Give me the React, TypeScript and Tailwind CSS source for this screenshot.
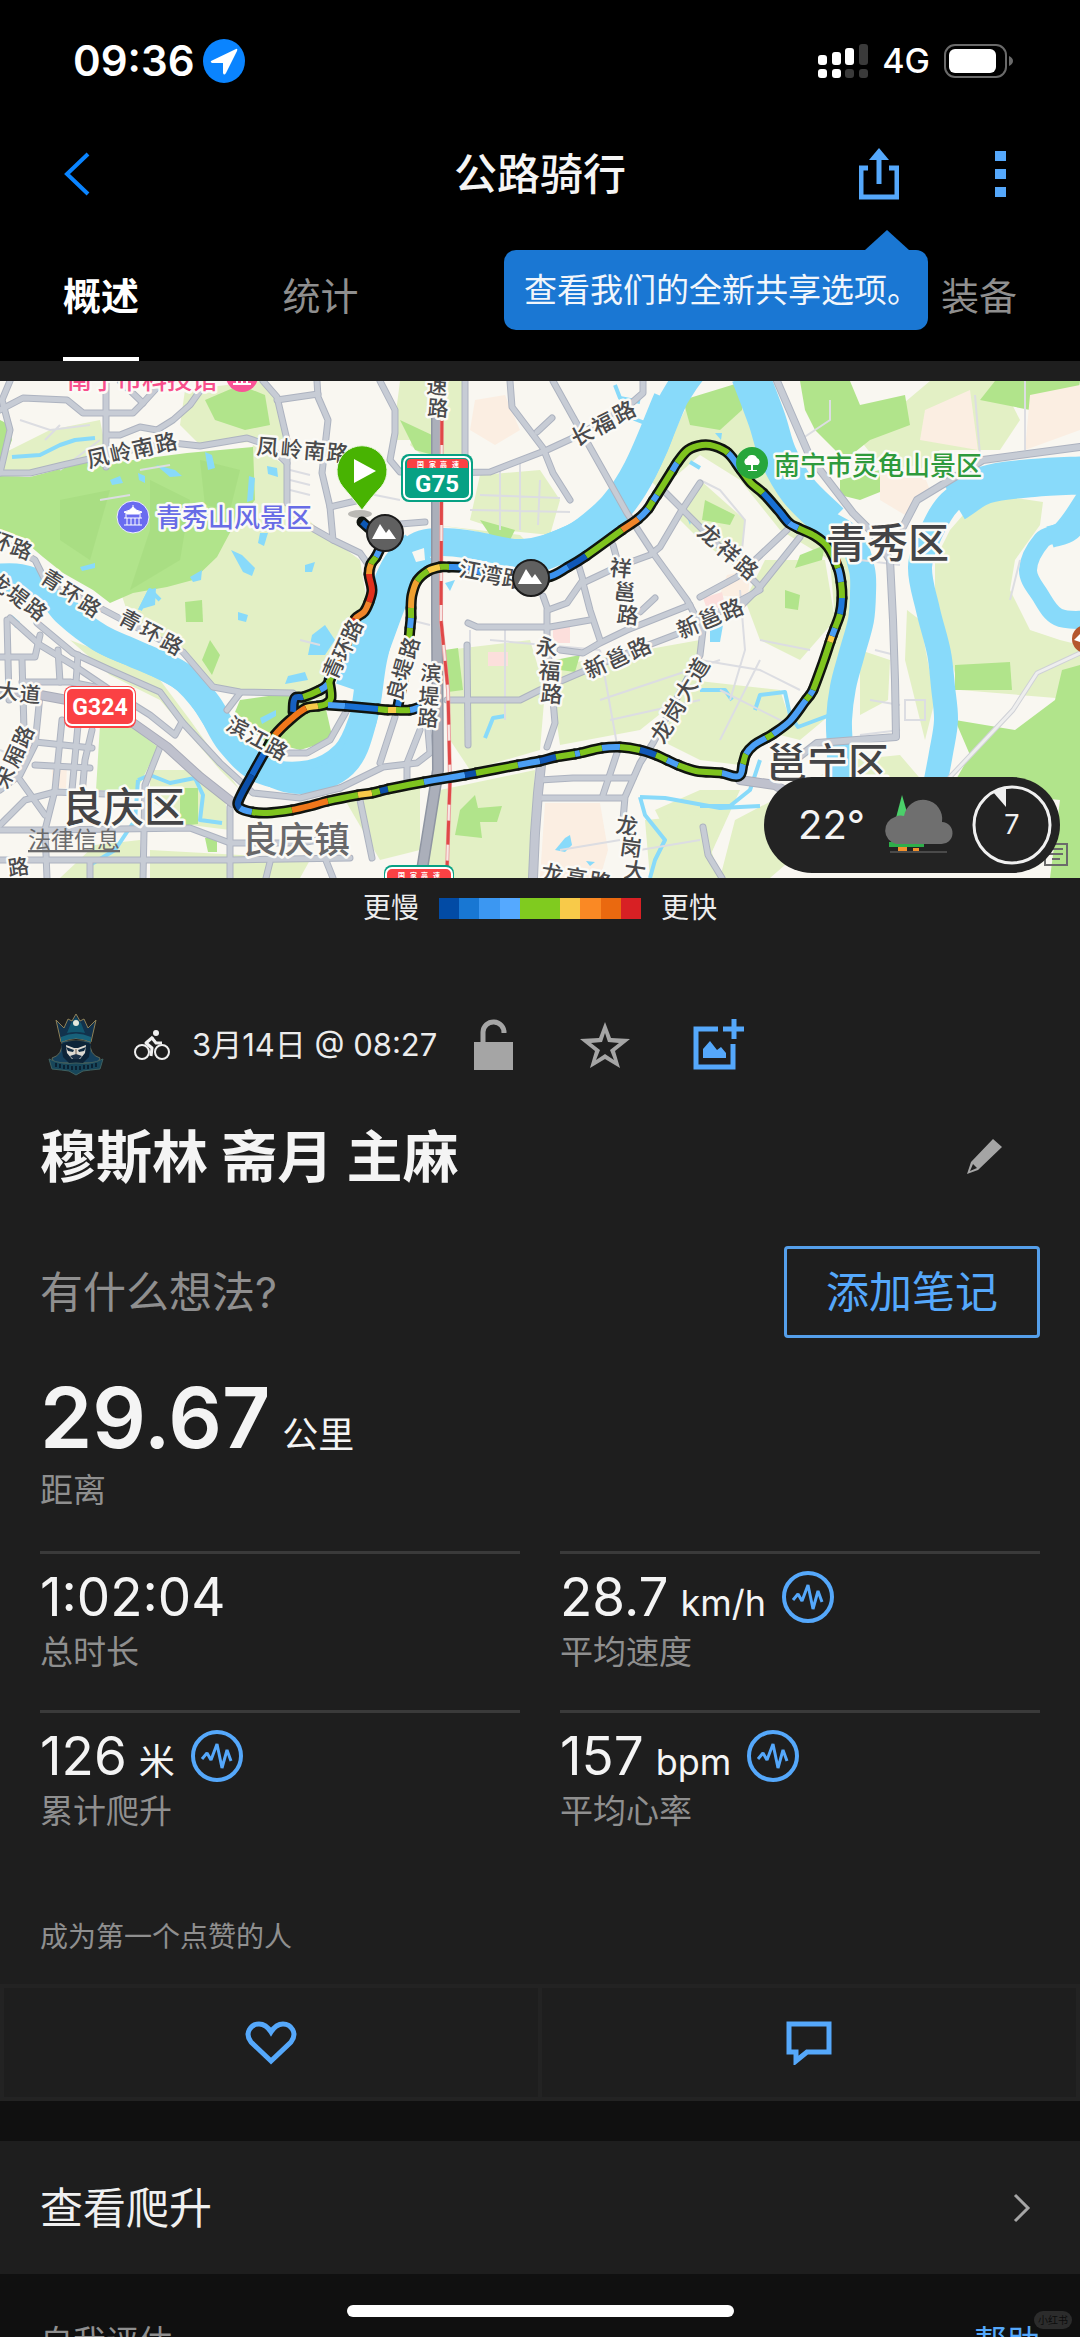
import React from "react";

const FONT = "font-['Inter','Noto_Sans_CJK_SC',sans-serif]";

type Pt = [number, number];

/* "M1 2 3 4" -> [[1,2],[3,4]] */
function points(d: string): Pt[] {
  const n = (d.match(/-?\d+/g) || []).map(Number);
  const out: Pt[] = [];
  for (let i = 0; i + 1 < n.length; i += 2) out.push([n[i], n[i + 1]]);
  return out;
}

/* Catmull-Rom curve through the points; `before` and `after` steer the end tangents. */
function curve(p: Pt[], before?: Pt, after?: Pt): string {
  let s = `M${p[0][0]} ${p[0][1]}`;
  for (let i = 0; i < p.length - 1; i++) {
    const a = p[i - 1] || before || p[i];
    const b = p[i];
    const c = p[i + 1];
    const e = p[i + 2] || after || c;
    const len = Math.hypot(c[0] - b[0], c[1] - b[1]);
    const t1 = Math.hypot(c[0] - a[0], c[1] - a[1]) || 1;
    const t2 = Math.hypot(e[0] - b[0], e[1] - b[1]) || 1;
    const k = len / 3;
    const x1 = b[0] + ((c[0] - a[0]) / t1) * k;
    const y1 = b[1] + ((c[1] - a[1]) / t1) * k;
    const x2 = c[0] - ((e[0] - b[0]) / t2) * k;
    const y2 = c[1] - ((e[1] - b[1]) / t2) * k;
    s += `C${x1.toFixed(1)} ${y1.toFixed(1)} ${x2.toFixed(1)} ${y2.toFixed(1)} ${c[0]} ${c[1]}`;
  }
  return s;
}

/* Places each character of a street name along a line, every glyph turned by `rot`. */
function Street({
  t,
  a,
  b,
  rot,
  size = 22,
  fill = "#4a4a4c",
  weight = 500,
}: {
  t: string;
  a: Pt;
  b: Pt;
  rot: number;
  size?: number;
  fill?: string;
  weight?: number;
}) {
  const r = (rot * Math.PI) / 180;
  const n = Math.max(1, t.length - 1);
  const ox = -size / 2;
  const oy = size * 0.38;
  const xs: number[] = [];
  const ys: number[] = [];
  for (let i = 0; i < t.length; i++) {
    const cx = a[0] + ((b[0] - a[0]) * i) / n;
    const cy = a[1] + ((b[1] - a[1]) * i) / n;
    xs.push(Math.round(cx + ox * Math.cos(r) - oy * Math.sin(r)));
    ys.push(Math.round(cy + ox * Math.sin(r) + oy * Math.cos(r)));
  }
  return (
    <text
      x={xs.join(" ")}
      y={ys.join(" ")}
      rotate={rot}
      fontSize={size}
      fontWeight={weight}
      fill={fill}
      stroke="#fbfaf6"
      strokeWidth={5}
      strokeLinejoin="round"
      paintOrder="stroke"
    >
      {t}
    </text>
  );
}

function Place({ t, x, y, size, fill = "#444446" }: { t: string; x: number; y: number; size: number; fill?: string }) {
  return (
    <text
      x={x}
      y={y}
      fontSize={size}
      fontWeight={500}
      fill={fill}
      stroke="#fbfaf6"
      strokeWidth={5}
      strokeLinejoin="round"
      paintOrder="stroke"
    >
      {t}
    </text>
  );
}

const ROADS = [
  "M0 473 30 473 63 465 85 460 140 448 173 443 200 446 247 438 268 445 287 463 287 503",
  "M0 410 23 398 67 400 83 413 133 413 143 403 163 381",
  "M120 381 143 403",
  "M106 381V467",
  "M107 435 120 435 140 427 157 430 173 420 190 405 207 381",
  "M263 381 277 397 287 440 287 463",
  "M317 381 318 397 328 420 322 473 330 507 333 540 360 553 372 570",
  "M277 400 318 394",
  "M303 523 333 540",
  "M330 507 360 500",
  "M10 381 2 400 10 430 0 473",
  "M380 381 395 410 395 433 390 460 400 472 440 473 490 472 547 450 573 438 627 407 643 393 643 381",
  "M465 381V460",
  "M400 524 425 522",
  "M510 381 512 407 543 448 553 473 570 500",
  "M537 432 552 418",
  "M553 381 573 417 627 513 653 553 687 600 703 630 700 655 653 743 640 763 625 797 623 820",
  "M583 583 617 567 650 555 660 547 680 513 700 483",
  "M543 596 548 610 567 603 583 580 577 560",
  "M583 583 590 610 600 640",
  "M665 492 720 547 760 587",
  "M700 597 737 577 787 530",
  "M735 612 760 587 800 537",
  "M447 700 520 700 540 690 617 657 680 633 760 590",
  "M560 650 583 653 600 643 627 630 690 605",
  "M467 645 468 745",
  "M468 623 477 627 550 627 590 620",
  "M613 545 620 570",
  "M640 612 655 598",
  "M547 610 547 640 553 700 555 723 547 747",
  "M540 780 573 778 633 778",
  "M540 798 623 798",
  "M617 753 603 795",
  "M340 788 383 767 417 763 430 753 428 730",
  "M395 717 380 763",
  "M420 730 407 763 407 780",
  "M0 540 35 560 45 580 100 608 183 652 213 687 240 692 293 693 300 700",
  "M277 753 307 753 330 740 347 710",
  "M227 710 240 693",
  "M37 623 73 653 110 670 160 692 183 723 220 763 253 793 300 798 340 788",
  "M10 618 40 645 73 665 110 690 150 715 175 735 182 722",
  "M230 807V878",
  "M0 830 47 830 190 828 230 843 300 843 330 838",
  "M0 860 230 860 350 858",
  "M160 747 145 785 143 878",
  "M7 620 9 700",
  "M0 657 35 657 40 635",
  "M22 682 70 682 110 690",
  "M58 650 60 682",
  "M78 655 76 682",
  "M22 660 24 730",
  "M40 695 35 745 20 775 0 790",
  "M62 720 55 790 45 830 47 878",
  "M78 725 72 790",
  "M92 730 85 760 82 795",
  "M35 742 92 748",
  "M35 765 90 768",
  "M20 780 45 815",
  "M0 825 25 800 55 792 130 795",
  "M90 862V878",
  "M360 800 372 858",
  "M325 858 333 878",
  "M270 862 266 878",
  "M703 827 708 855 722 878",
];

const LANES =
  "M20 420 50 430 90 425M45 440 60 425M140 470 170 465M500 470V530M520 460V530M540 480 538 525M480 495 560 498M470 510 570 512M410 470 412 500M350 490 400 500M410 620 430 625M470 630V650M505 627V720M490 640 600 650M600 700 720 660M610 720 700 700M600 650 618 750M720 690 790 725M700 660 760 670 800 690M740 590 745 650 730 700M720 740 760 660M760 640 810 650M860 560 900 565M875 650 895 655M870 700 900 705M860 735 900 730M905 700 925 700 925 720 905 720ZM975 395 980 455M1025 381V450M800 440 830 420 830 400M1010 600 1020 560M300 640 320 645M560 850 620 840M640 850 700 840M100 500 130 495M0 750 20 760M100 440 60 470M290 470 310 475M290 480 310 485M290 490 310 495M700 480 720 490 745 520 740 570";

const WATER: { d: string; w: number }[] = [
  { d: "M-10 578 20 578 45 588 67 613 100 638 133 653 180 675 208 705 230 742 262 770 310 774 345 755 362 722 368 690 372 655 385 620 395 580 415 548 440 542 473 545 523 553 573 538 607 512 637 480 655 445 668 410 685 381 710 350", w: 28 },
  { d: "M-10 585 30 585 60 603 100 640 150 662 190 685 220 727 255 765 300 782 345 765 365 720 375 660 385 620", w: 24 },
  { d: "M355 690 372 640 400 570 420 548", w: 40 },
  { d: "M540 555 585 535 615 508 640 470 670 400", w: 34 },
  { d: "M680 345 730 345 756 381 765 420 780 460 795 490 823 520 850 538 862 570 863 593 861 620 852 653 843 687 839 720 840 753 838 800", w: 26 },
  { d: "M750 375 767 420 778 455 798 490 830 522", w: 38 },
  { d: "M1100 470 1033 478 983 483 950 502 930 535 920 567 928 610 939 653 943 687 946 720 941 753 935 785", w: 24 },
  { d: "M1090 475 1033 478 985 485 955 503", w: 38 },
  { d: "M1090 490 1062 530 1042 540 1028 570 1040 595 1058 617 1090 620", w: 18 },
  { d: "M1095 500 1070 530 1050 537", w: 22 },
];

const BROOKS =
  "M12 457 40 455 60 445 75 440 95 438M615 385 620 398 640 402M632 418 650 425M485 738 493 718 505 716M640 797 665 798 720 808 760 806M760 760 750 790 730 806 700 806M640 797 645 815 665 840 655 860 650 878M138 780 150 775 170 783 195 778 203 795 200 820 222 823M138 780 135 820 115 850 90 865M700 690 725 690 732 700M755 710 760 695 785 692 790 715 798 727 830 715M690 462 700 468M140 610 150 590 160 600";

/* Speed-coloured pieces of the ride, in riding order. */
const SEG: [string, string][] = [
  ["#0c58b5", "M362 522 372 530 385 533"],
  ["#4b9ff5", "M384 540 376 557"],
  ["#7fc41f", "M376 557 371 564"],
  ["#f09a2e", "M371 564 369 574"],
  ["#e0301c", "M369 574 372 590 369 602"],
  ["#f0852a", "M369 602 364 612 355 619"],
  ["#e0301c", "M355 619 348 640 340 655"],
  ["#f0852a", "M340 655 332 675"],
  ["#7fc41f", "M332 675 328 684"],
  ["#4b9ff5", "M328 684 320 690"],
  ["#7fc41f", "M320 690 303 697"],
  ["#1760c0", "M303 697 295 698 293 712"],
  ["#7fc41f", "M329 680 331 698 326 704 318 706"],
  ["#f8ca49", "M318 706 306 708"],
  ["#f0771b", "M306 708 290 720 275 735"],
  ["#7fc41f", "M275 735 266 750"],
  ["#1565c8", "M266 750 252 775"],
  ["#0b4fa8", "M252 775 238 802 240 808"],
  ["#4b9ff5", "M240 808 252 812"],
  ["#7fc41f", "M252 812 267 813 292 810"],
  ["#f0771b", "M292 810 310 806 328 801"],
  ["#7fc41f", "M328 801 358 795"],
  ["#f8ca49", "M358 795 372 793"],
  ["#7fc41f", "M372 793 380 791"],
  ["#0b4fa8", "M380 791 388 789"],
  ["#7fc41f", "M388 789 424 782"],
  ["#4b9ff5", "M424 782 465 775"],
  ["#0b4fa8", "M465 775 476 773"],
  ["#7fc41f", "M476 773 518 765"],
  ["#4b9ff5", "M518 765 540 761"],
  ["#1058b8", "M540 761 556 757"],
  ["#7fc41f", "M556 757 575 754"],
  ["#4b9ff5", "M575 754 580 753"],
  ["#7fc41f", "M580 753 602 748"],
  ["#4b9ff5", "M602 748 620 747"],
  ["#7fc41f", "M620 747 640 750"],
  ["#1058b8", "M640 750 656 755"],
  ["#7fc41f", "M656 755 667 760"],
  ["#4b9ff5", "M667 760 678 765"],
  ["#7fc41f", "M678 765 696 771 722 773"],
  ["#4b9ff5", "M722 773 739 776 743 764"],
  ["#7fc41f", "M743 764 746 754"],
  ["#4b9ff5", "M746 754 754 745 766 738"],
  ["#7fc41f", "M766 738 773 734"],
  ["#4b9ff5", "M773 734 790 721 806 700"],
  ["#7fc41f", "M806 700 810 695"],
  ["#4b9ff5", "M810 695 813 690"],
  ["#7fc41f", "M813 690 823 663 830 642"],
  ["#f8ca49", "M830 642 832 636"],
  ["#4b9ff5", "M832 636 835 628"],
  ["#7fc41f", "M835 628 840 614"],
  ["#1f78d8", "M840 614 842 598"],
  ["#7fc41f", "M842 598 841 582"],
  ["#4b9ff5", "M841 582 838 568"],
  ["#7fc41f", "M838 568 828 547 815 536 798 528"],
  ["#4b9ff5", "M798 528 789 523"],
  ["#1870d4", "M789 523 779 511 763 493"],
  ["#7fc41f", "M763 493 751 483 741 470"],
  ["#4b9ff5", "M741 470 728 453"],
  ["#7fc41f", "M728 453 714 446 702 445 688 450 677 463"],
  ["#4b9ff5", "M677 463 672 471"],
  ["#7fc41f", "M672 471 657 495"],
  ["#4b9ff5", "M657 495 653 501"],
  ["#7fc41f", "M653 501 648 509"],
  ["#4b9ff5", "M648 509 638 519"],
  ["#f0852a", "M638 519 622 530"],
  ["#7fc41f", "M622 530 586 556"],
  ["#1058b8", "M586 556 568 567"],
  ["#3a92ee", "M568 567 548 577"],
  ["#3a92ee", "M548 577 500 577 465 568 449 567"],
  ["#7fc41f", "M449 567 440 567"],
  ["#f8ca49", "M440 567 428 571"],
  ["#7fc41f", "M428 571 417 581"],
  ["#f0a030", "M417 581 412 595 411 608"],
  ["#7fc41f", "M411 608 411 618"],
  ["#4b9ff5", "M411 618 410 628"],
  ["#7fc41f", "M410 628 408 650"],
  ["#1f78d8", "M408 650 403 680 398 706"],
  ["#4b9ff5", "M328 705 345 706"],
  ["#1870d4", "M345 706 378 709"],
  ["#7fc41f", "M378 709 388 710"],
  ["#f8ca49", "M388 710 396 710"],
  ["#7fc41f", "M396 710 410 710"],
  ["#4b9ff5", "M410 710 420 707"],
];

const SEG_PTS = SEG.map(([, d]) => points(d));

/* Smooth each piece using its neighbours, so that the joints stay continuous. */
const TRACK = SEG.map(([color], i) => {
  const p = SEG_PTS[i];
  const prev = SEG_PTS[i - 1];
  const next = SEG_PTS[i + 1];
  const last = p[p.length - 1];
  const joinsPrev = prev && prev[prev.length - 1][0] === p[0][0] && prev[prev.length - 1][1] === p[0][1];
  const joinsNext = next && next[0][0] === last[0] && next[0][1] === last[1];
  return {
    color,
    d: curve(p, joinsPrev ? prev[prev.length - 2] : undefined, joinsNext ? next[1] : undefined),
  };
});

function Mountain({ x, y }: { x: number; y: number }) {
  return (
    <g>
      <circle cx={x} cy={y} r={18} fill="#606060" stroke="#1b1b1b" strokeWidth={2} />
      <path d={`M${x - 13} ${y + 6}L${x - 5} ${y - 9}L${x + 1} ${y}L${x + 4} ${y - 4}L${x + 11} ${y + 6}Z`} fill="#fff" />
    </g>
  );
}

function MapView() {
  return (
    <svg viewBox="0 381 1080 497" className="block w-full" role="img" aria-label="骑行路线地图">
      <rect x="0" y="381" width="1080" height="497" fill="#f9f7f1" />

      {/* meadows */}
      <g fill="#e3f0c5">
        <path d="M0 455 50 430 100 420 106 450 60 470 0 480Z" />
        <path d="M185 390 260 381 275 400 285 440 200 445 180 425Z" />
        <path d="M253 445 285 465 285 500 320 530 360 560 370 620 340 660 330 700 215 690 190 655 130 620 120 590 190 580 225 540Z" />
        <path d="M400 381 465 381 465 470 410 440 390 440 395 420Z" />
        <path d="M410 445 430 400 465 400 463 465 440 470Z" />
        <path d="M480 475 540 470 560 500 550 535 500 530 470 520Z" />
        <path d="M435 525 520 535 530 545 470 530Z" />
        <path d="M690 400 745 381 758 430 775 480 800 520 850 545 852 610 838 680 830 715 800 740 780 735 810 690 835 620 830 560 780 530 740 480 700 455 660 490 650 480Z" />
        <path d="M700 480 745 520 740 570 700 540 680 520Z" />
        <path d="M765 560 825 560 835 620 800 660 760 640 745 600Z" />
        <path d="M860 440 930 381 1000 381 1020 420 1000 450 940 450 900 490Z" />
        <path d="M950 530 970 507 1010 497 1043 502 1040 525 1015 560 1010 590 1030 630 1060 640 1080 645 1080 700 960 690 945 640 935 590 935 560Z" />
        <path d="M447 650 530 640 545 690 540 750 470 770 450 740Z" />
        <path d="M560 665 700 640 690 690 640 730 560 745 555 710Z" />
        <path d="M690 680 780 690 790 720 740 765 700 760 660 740Z" />
        <path d="M440 790 535 770 530 878 425 878Z" />
        <path d="M700 790 740 790 700 878 660 878 670 840 655 810Z" />
        <path d="M645 820 700 815 720 878 650 878Z" />
        <path d="M70 640 110 655 160 680 190 720 240 790 220 770 160 700 110 675Z" />
        <path d="M150 770 200 770 225 800 230 830 190 825 150 800Z" />
        <path d="M95 845 140 840 140 878 60 878Z" />
        <path d="M240 855 310 860 300 878 150 878 150 850Z" />
        <path d="M860 650 890 660 888 700 860 715Z" />
        <path d="M907 610 920 620 935 700 925 740 905 660Z" />
        <path d="M850 760 900 755 930 790 860 800 770 878 720 878 735 820Z" />
        <path d="M345 800 420 785 420 850 380 860Z" />
      </g>

      {/* woods */}
      <g fill="#b1e48b">
        <path d="M0 476 30 477 83 463 133 460 187 453 253 447 255 500 233 527 217 557 193 580 167 587 133 593 110 603 93 590 63 573 43 557 23 540 0 537Z" />
        <path d="M205 400 240 385 265 395 270 425 245 430 215 420Z" />
        <path d="M185 602 202 600 203 622 186 622Z" />
        <path d="M240 700 290 693 325 705 333 740 300 750 262 740 235 712Z" />
        <path d="M683 400 745 381 742 410 720 430 690 425Z" />
        <path d="M800 381 850 381 860 405 905 395 910 425 870 440 845 460 815 430 805 410Z" />
        <path d="M840 480 880 470 885 490 860 500 840 495Z" />
        <path d="M995 381 1080 381 1078 395 1030 410 980 400Z" />
        <path d="M400 420 432 435 433 455 415 450Z" />
        <path d="M445 650 458 648 463 690 448 692Z" />
        <path d="M555 660 580 655 575 672 560 670Z" />
        <path d="M460 810 475 795 478 808 502 806 497 822 480 822 482 838 455 835Z" />
        <path d="M705 500 735 515 730 525 702 520Z" />
        <path d="M800 555 825 545 822 560 795 568Z" />
        <path d="M785 590 800 595 798 610 785 608Z" />
        <path d="M955 665 1010 662 1012 690 955 690Z" />
        <path d="M955 720 1015 730 1055 700 1062 670 1080 665 1080 878 1050 878 1060 800 950 790 970 755Z" />
        <path d="M180 788 198 788 198 824 180 826Z" />
        <path d="M205 838 217 838 217 852 208 852Z" />
        <path d="M210 640 220 655 212 675 202 660Z" />
        <path d="M0 420 10 425 12 440 0 470Z" />
        <path d="M480 520 515 530 510 540 490 535Z" />
      </g>
      <path d="M100 725 133 728 158 747 142 780 135 792 96 790Z" fill="#cdeeb0" />
      <g fill="#a2d97c" opacity="0.5">
        <path d="M150 480 190 500 180 560 130 590 150 530Z" />
        <path d="M60 500 110 490 90 560 60 540Z" />
        <path d="M200 460 240 470 230 510 205 505Z" />
      </g>
      <g fill="#fbeee2">
        <path d="M475 400 505 395 520 430 495 445 470 430Z" />
        <path d="M545 803 600 803 608 850 600 878 540 878Z" />
        <path d="M925 410 970 390 978 450 920 440Z" />
        <path d="M880 470 920 465 930 490 905 515 880 500Z" />
        <path d="M1030 395 1080 385 1080 430 1025 450Z" />
        <path d="M52 770 67 765 66 788 52 788Z" />
        <path d="M727 575 750 570 748 600 720 595Z" />
      </g>
      <g fill="#fcdfdc">
        <path d="M488 652H508V666H488Z" />
        <path d="M553 627H570V643H553Z" />
        <path d="M703 598 722 592 725 605 708 612Z" />
      </g>

      {/* water */}
      <g fill="none" stroke="#88dafa" strokeLinejoin="round">
        {WATER.map((w, i) => (
          <path key={i} d={curve(points(w.d))} strokeWidth={w.w} />
        ))}
        <path d={BROOKS} strokeWidth={4} />
      </g>
      <g fill="#88dafa">
        <path d="M156 465 175 470 182 476 170 477Z" />
        <path d="M205 452 212 455 215 468 208 470Z" />
        <path d="M110 480 120 476 123 483 112 485Z" />
        <path d="M138 473 145 476 145 483 139 480Z" />
        <path d="M267 466 277 468 278 477 268 474Z" />
        <path d="M249 476 255 478 253 500 247 502Z" />
        <path d="M231 550 242 555 255 568 252 576 243 572Z" />
        <path d="M260 533 268 533 264 546 258 543Z" />
        <path d="M80 567 95 563 95 568 82 571Z" />
        <path d="M190 577 202 570 201 580 193 582Z" />
        <path d="M148 590 156 588 155 605 138 610Z" />
        <path d="M238 612 248 615 246 622 238 620Z" />
        <path d="M305 565 315 562 312 572 305 572Z" />
        <path d="M312 635 325 625 335 640 325 655 308 655Z" />
        <path d="M288 676 305 672 308 680 285 684Z" />
        <path d="M260 718 276 710 276 716 262 724Z" />
        <path d="M12 615 20 622 15 628Z" />
        <path d="M710 630 723 625 720 642 710 642Z" />
        <path d="M565 838 570 835 572 845 565 852 555 850Z" />
        <path d="M586 861 595 862 590 866Z" />
        <path d="M445 583 455 580 450 591Z" />
        <path d="M684 510 692 518 690 525Z" />
        <path d="M715 433 722 433 721 440Z" />
      </g>
      <path d="M412 552 424 548 425 560 416 562Z" fill="#f9f7f1" />

      {/* roads */}
      <path d={LANES} fill="none" stroke="#dcdde2" strokeWidth={2} />
      <g fill="none" strokeLinejoin="round" strokeLinecap="round">
        {ROADS.map((d, i) => (
          <path key={i} d={d} stroke="#adb3c0" strokeWidth={7} />
        ))}
        <path
          d="M777 381 810 457 853 513 873 533 890 560 893 620 895 680 896 737 817 743 795 760M903 527 917 500 950 480 983 460 1080 447"
          stroke="#adb3c0"
          strokeWidth={8}
        />
        <path d="M541 765 538 793 535 833 533 878" stroke="#adb3c0" strokeWidth={10} />
        {ROADS.map((d, i) => (
          <path key={i} d={d} stroke="#c7ccd5" strokeWidth={5} />
        ))}
        <path
          d="M777 381 810 457 853 513 873 533 890 560 893 620 895 680 896 737 817 743 795 760M903 527 917 500 950 480 983 460 1080 447"
          stroke="#c7ccd5"
          strokeWidth={6}
        />
        <path d="M541 765 538 793 535 833 533 878" stroke="#c3c7d2" strokeWidth={8} />
        <path d="M0 690 40 695 67 700 133 723 167 747 200 777 233 803M740 780 775 785 800 800" stroke="#a9acb9" strokeWidth={10} />
        <path d="M0 690 40 695 67 700 133 723 167 747 200 777 233 803M740 780 775 785 800 800" stroke="#bfc1cd" strokeWidth={8} />
        <path d="M1080 653 1037 673 1013 710 950 777" stroke="#cfd1d6" strokeWidth={5} />
        <path d="M1080 653 1037 673 1013 710 950 777" stroke="#eeeeee" strokeWidth={3} />
        <path d="M437 381V620L438 770 422 870" stroke="#8f95a2" strokeWidth={12} />
        <path d="M437 381V620L438 770 422 870" stroke="#abafba" strokeWidth={9} />
        <path d="M442 381 441 620 448 690 450 780 447 870" stroke="#e9a3a3" strokeWidth={4} strokeLinecap="butt" />
        <path d="M442 381 441 620 448 690 450 780 447 870" stroke="#f8e6e3" strokeWidth={2} strokeLinecap="butt" />
        <path
          d="M442 381 441 620 448 690 450 780 447 870"
          stroke="#e04848"
          strokeWidth={3}
          strokeDasharray="24 16"
          strokeLinecap="butt"
        />
      </g>

      {/* recorded track */}
      <g fill="none" stroke="#10140f" strokeWidth={11} strokeLinejoin="round" strokeLinecap="round">
        {TRACK.map((s, i) => (
          <path key={i} d={s.d} />
        ))}
      </g>
      <g fill="none" strokeWidth={6} strokeLinejoin="round" strokeLinecap="butt">
        {TRACK.map((s, i) => (
          <path key={i} d={s.d} stroke={s.color} />
        ))}
      </g>

      {/* street names */}
      <Street t="凤岭南路" a={[98, 457]} b={[166, 442]} rot={-13} />
      <Street t="凤岭南路" a={[268, 447]} b={[338, 453]} rot={5} />
      <Street t="速路" a={[437, 386]} b={[438, 408]} rot={4} size={21} />
      <Street t="长福路" a={[582, 435]} b={[624, 412]} rot={-27} />
      <Street t="江湾路" a={[470, 570]} b={[513, 579]} rot={10} />
      <Street t="祥邕路" a={[621, 568]} b={[628, 615]} rot={6} size={22} />
      <Street t="龙祥路" a={[710, 535]} b={[747, 568]} rot={40} size={22} />
      <Street t="新邕路" a={[688, 627]} b={[732, 609]} rot={-23} size={22} />
      <Street t="新邕路" a={[595, 667]} b={[639, 648]} rot={-25} size={22} />
      <Street t="永福路" a={[547, 647]} b={[552, 694]} rot={5} size={22} />
      <Street t="龙岗大道" a={[662, 731]} b={[698, 669]} rot={-58} size={22} />
      <Street t="龙岗大" a={[627, 825]} b={[635, 870]} rot={8} size={22} />
      <Street t="龙高路" a={[552, 873]} b={[600, 881]} rot={9} size={22} />
      <Street t="环路" a={[2, 541]} b={[22, 549]} rot={20} size={21} />
      <Street t="青环路" a={[52, 580]} b={[90, 606]} rot={32} size={21} />
      <Street t="青环路" a={[130, 620]} b={[172, 644]} rot={28} size={21} />
      <Street t="龙堤路" a={[0, 583]} b={[36, 609]} rot={38} size={21} />
      <Street t="大道" a={[8, 691]} b={[30, 694]} rot={5} size={21} />
      <Street t="宋厢路" a={[4, 777]} b={[23, 736]} rot={-66} size={21} />
      <Street t="路" a={[18, 867]} b={[18, 867]} rot={-8} size={21} />
      <Street t="滨江路" a={[238, 727]} b={[277, 749]} rot={28} size={21} />
      <Street t="青环路" a={[333, 668]} b={[352, 630]} rot={-66} size={21} />
      <Street t="良堤路" a={[396, 690]} b={[409, 648]} rot={-74} size={21} />
      <Street t="滨堤路" a={[431, 673]} b={[428, 718]} rot={4} size={21} />

      <Place t="青秀区" x={826} y={558} size={41} />
      <Place t="良庆区" x={62} y={822} size={41} />
      <Place t="邕宁区" x={766} y={778} size={41} />
      <Place t="良庆镇" x={242} y={853} size={36} fill="#68686a" />
      <Place t="青秀山风景区" x={156} y={527} size={26} fill="#686ce6" />
      <Place t="南宁市灵龟山景区" x={774} y={475} size={26} fill="#2e9a3c" />
      <Place t="南宁市科技馆" x={67} y={389} size={25} fill="#f84f8c" />
      <text x="28" y="848" fontSize="23" fontWeight="400" fill="#6a6a6c" textDecoration="underline">
        法律信息
      </text>

      {/* points of interest */}
      <circle cx="242" cy="376" r="16" fill="#fa5397" />
      <path d="M233 384H251M237 378V384M242 378V384M247 378V384" stroke="#fff" strokeWidth={2} />
      <circle cx="133" cy="517" r="16" fill="#6a6cf0" stroke="#eef" strokeWidth={1} />
      <path
        d="M133 505V508M124 512Q130 511 133 507Q136 511 142 512L139 514H127ZM126 514V518M140 514V518M124 518H142M127 518V525M131 518V525M135 518V525M139 518V525M124 525H142"
        stroke="#fff"
        strokeWidth={1}
        fill="#fff"
      />
      <circle cx="752" cy="463" r="16" fill="#27a63c" />
      <path
        d="M752 455a5 5 0 0 1 5 3 4 4 0 0 1 1 7h-12a4 4 0 0 1 1-7 5 5 0 0 1 5-3ZM751 464H753V470H757V471H748V470H751Z"
        fill="#fff"
      />
      <circle cx="1086" cy="639" r="14" fill="#b5572d" />
      <path d="M1074 640 1080 634V642Z" fill="#fff" />

      {/* highway shields */}
      <rect x="401" y="454" width="72" height="48" rx="8" fill="#07a184" />
      <rect x="404" y="457" width="66" height="42" rx="6" fill="#07a184" stroke="#fff" strokeWidth={2} />
      <path d="M407 468V463Q407 459 411 459H463Q468 459 468 463V468Z" fill="#fb4144" />
      <text x="417 429 440 452" y="467" fontSize="7" fontWeight="700" fill="#fff">
        国家高速
      </text>
      <text x="437" y="492" fontSize="24" fontWeight="700" fill="#fff" textAnchor="middle" fontFamily="Roboto, sans-serif">
        G75
      </text>
      <rect x="64" y="686" width="72" height="42" rx="8" fill="#fb4144" />
      <rect x="66" y="688" width="68" height="37" rx="6" fill="#fb4144" stroke="#fff" strokeWidth={2} />
      <text x="100" y="715" fontSize="23" fontWeight="700" fill="#fff" textAnchor="middle" fontFamily="Roboto, sans-serif">
        G324
      </text>
      <rect x="384" y="865" width="70" height="40" rx="8" fill="#07a184" />
      <rect x="386" y="868" width="66" height="40" rx="6" fill="#fb4144" stroke="#fff" strokeWidth={2} />
      <text x="398 410 421 433" y="878" fontSize="7" fontWeight="700" fill="#fff">
        国家高速
      </text>

      {/* start pin and climbs */}
      <ellipse cx="360" cy="514" rx="12" ry="4" fill="#000" opacity="0.25" />
      <Mountain x={385} y={533} />
      <Mountain x={531} y={578} />
      <path
        d="M362 510Q350 495 343 487A25 25 0 1 1 381 487Q373 495 362 510Z"
        fill="#48b302"
        stroke="#eaf6df"
        strokeWidth={1}
      />
      <path d="M354 459V483L376 471Z" fill="#fff" />

      {/* attribution badge */}
      <g fill="none" stroke="#6b6b6b" strokeWidth={2}>
        <rect x="1045" y="844" width="22" height="21" />
        <path d="M1049 849H1063M1049 854H1063M1052 859H1060" />
      </g>
    </svg>
  );
}

function Weather() {
  return (
    <div className="absolute right-5 bottom-[5px] flex h-24 w-[296px] items-center rounded-full bg-[#232323] pr-2 pl-[34px] text-[#f4f4f4]">
      <span className="w-[72px] text-[40px] leading-none font-normal">22°</span>
      <svg width="72" height="60" viewBox="0 0 72 60" className="ml-3" aria-hidden="true">
        <path d="M20 0 31 38H10Z" fill="#4bd06a" />
        <path d="M7 47H42V52H7Z" fill="#2eae4a" />
        <path d="M16 52H25V56H16ZM31 53H37V56H31Z" fill="#f3912d" />
        <path d="M14 49a14 14 0 0 1-1-27 12 12 0 0 1 9-1 19 19 0 0 1 38 6 11 11 0 0 1-1 22Z" fill="#6f6f6f" />
        <path d="M8 57H65" stroke="#4a4a4a" strokeWidth={2} />
      </svg>
      <svg width="80" height="80" viewBox="0 0 80 80" className="ml-auto" role="img" aria-label="风速 7">
        <circle cx="40" cy="40" r="38" fill="none" stroke="#f0f0f0" strokeWidth={3} />
        <path d="M21 7Q27 4 34 3V22Z" fill="#f0f0f0" />
        <text x="40" y="49" fontSize="27" textAnchor="middle" fill="#f0f0f0">
          7
        </text>
      </svg>
    </div>
  );
}

function StatusBar() {
  return (
    <div className="flex h-[122px] items-center justify-between pr-[67px] pl-[73px] text-white">
      <div className="flex items-center gap-2">
        <span className="text-[42px] leading-none font-semibold">09:36</span>
        <svg width="42" height="44" viewBox="0 0 42 44" aria-hidden="true">
          <ellipse cx="21" cy="22" rx="21" ry="22" fill="#0a84ff" />
          <path d="M33 10 8 22Q7 23 9 24L20 24 20 34Q21 37 23 34L34 12Q35 9 33 10Z" fill="#fff" />
        </svg>
      </div>
      <div className="flex items-center gap-[14px]">
        <svg width="50" height="36" viewBox="0 0 50 36" aria-hidden="true">
          <rect x="0" y="12" width="9" height="10" rx="3" fill="#fff" />
          <rect x="14" y="9" width="9" height="13" rx="3" fill="#fff" />
          <rect x="27" y="5" width="9" height="17" rx="3" fill="#fff" />
          <rect x="41" y="1" width="9" height="21" rx="3" fill="#3a3a3a" />
          <rect x="0" y="26" width="9" height="9" rx="3" fill="#fff" />
          <rect x="14" y="26" width="9" height="9" rx="3" fill="#fff" />
          <rect x="27" y="26" width="9" height="9" rx="3" fill="#3a3a3a" />
          <rect x="41" y="26" width="9" height="9" rx="3" fill="#3a3a3a" />
        </svg>
        <span className="text-[34px] leading-none font-medium">4G</span>
        <svg width="69" height="34" viewBox="0 0 69 34" aria-hidden="true">
          <rect x="1" y="1" width="61" height="32" rx="10" fill="none" stroke="#6a6a6a" strokeWidth={2} />
          <rect x="5" y="5" width="47" height="24" rx="6" fill="#fff" />
          <path d="M65 12Q69 14 69 17T65 22Z" fill="#6a6a6a" />
        </svg>
      </div>
    </div>
  );
}

function Header() {
  return (
    <header className="relative bg-black">
      <StatusBar />
      <div className="grid h-[104px] grid-cols-3 items-center px-16">
        <button type="button" aria-label="返回" className="justify-self-start">
          <svg width="26" height="44" viewBox="0 0 26 44" fill="none" stroke="#0a84ff" strokeWidth={4}>
            <path d="M24 2 3 22 24 42" />
          </svg>
        </button>
        <h1 className="text-center text-[43px] leading-[56px] font-medium whitespace-nowrap text-[#f5f5f5]">公路骑行</h1>
        <div className="flex items-center gap-24 justify-self-end pr-[10px]">
          <button type="button" aria-label="共享">
            <svg width="40" height="52" viewBox="0 0 40 52" fill="none" stroke="#55a8fb" strokeWidth={5}>
              <path d="M9 20H2V49H38V20H30" />
              <path d="M20 36V8" />
              <path d="M20 0 30 12H10Z" fill="#55a8fb" stroke="none" />
            </svg>
          </button>
          <button type="button" aria-label="更多">
            <svg width="11" height="46" viewBox="0 0 11 46" fill="#55a8fb">
              <rect width="11" height="10" />
              <rect y="18" width="11" height="10" />
              <rect y="36" width="11" height="10" />
            </svg>
          </button>
        </div>
      </div>
      <nav className="flex h-[135px] justify-between px-[63px] text-[38px] leading-[56px] text-[#8f8f8f]" aria-label="活动">
        <button type="button" className="border-b-4 border-white pt-2 font-bold text-white" aria-current="page">
          概述
        </button>
        <button type="button" className="pt-1">
          统计
        </button>
        <button type="button" className="w-[76px]" aria-label="计圈" />
        <button type="button" className="w-[76px]" aria-label="图表" />
        <button type="button" className="pt-1">
          装备
        </button>
      </nav>
      <div role="tooltip" className="absolute top-[230px] right-[152px] flex flex-col items-end">
        <svg width="44" height="20" viewBox="0 0 44 20" className="mr-[19px]" aria-hidden="true">
          <path d="M0 20 22 0 44 20Z" fill="#1a77d3" />
        </svg>
        <p className="h-20 rounded-xl bg-[#1a77d3] pr-2 pl-5 text-[33px] leading-[80px] whitespace-nowrap text-[#f2f6fb]">
          查看我们的全新共享选项。
        </p>
      </div>
    </header>
  );
}

const LEGEND = [
  "bg-[#024ba5]",
  "bg-[#1877d3]",
  "bg-[#3b97f2]",
  "bg-[#55a9ff]",
  "bg-[#80cb1f]",
  "bg-[#80cb1f]",
  "bg-[#f8ca49]",
  "bg-[#fa8924]",
  "bg-[#ea690f]",
  "bg-[#d82024]",
];

function Legend() {
  return (
    <div className="flex h-[60px] items-center justify-center gap-5 text-[28px] leading-10 text-[#ececec]">
      <span>更慢</span>
      <div className="grid h-[21px] w-[202px] grid-cols-10">
        {LEGEND.map((c, i) => (
          <span key={i} className={c} />
        ))}
      </div>
      <span>更快</span>
    </div>
  );
}

function Avatar() {
  return (
    <svg width="56" height="64" viewBox="0 0 56 64" aria-label="头像" role="img">
      <path
        d="M14 28Q15 42 4 45Q5 51 16 50L40 50Q51 51 52 45Q41 42 42 28Z"
        fill="#15405c"
        stroke="#5f6a5a"
        strokeWidth={1}
      />
      <path d="M13 31Q28 24 43 31L41 44 32 53H24L15 44Z" fill="#0d2438" />
      <path
        d="M8 7 16 15 20 6 24 8 28 1 32 8 36 6 40 15 48 7 43 29Q28 22 13 29Z"
        fill="#12324c"
        stroke="#8f8157"
        strokeWidth={1}
      />
      <path d="M19 20 23 10 28 5 33 10 37 20Q28 18 19 20Z" fill="#12566e" />
      <circle cx="28" cy="10" r="3" fill="#e6e9dc" />
      <path d="M13 24Q28 17 43 24V29Q28 22 13 29Z" fill="#17617a" />
      <path d="M18 32 26 35H30L38 32 37 40 32 46H24L19 40Z" fill="#dedad2" />
      <path d="M18 34 26 37 25 39 20 38ZM38 34 30 37 31 39 36 38Z" fill="#102a40" />
      <path d="M27 36H29V41H27Z" fill="#a89d92" />
      <path d="M22 43 28 41 34 43 31 46H25Z" fill="#1b3048" />
      <path
        d="M1 46Q14 52 28 50Q42 52 55 46L52 56Q42 57 35 58L28 62 21 58Q14 57 4 56Z"
        fill="#17465a"
        stroke="#3f605f"
        strokeWidth={1}
      />
      <path
        d="M8 50V54M12 51V55M16 52V56M20 52V56M24 53V57M28 53V57M32 53V57M36 52V56M40 52V56M44 51V55M48 50V54"
        stroke="#0b2233"
        strokeWidth={2}
      />
    </svg>
  );
}

function Cyclist() {
  return (
    <svg width="36" height="32" viewBox="0 0 36 32" fill="none" stroke="#f0f0f0" aria-hidden="true">
      <circle cx="8" cy="23" r="7" strokeWidth={2} />
      <circle cx="28" cy="23" r="7" strokeWidth={2} />
      <circle cx="22" cy="4" r="3" fill="#f0f0f0" stroke="none" />
      <path d="M19 8 12 14 18 19 17 27" strokeWidth={3} strokeLinejoin="round" />
      <path d="M18 9 22 14H28" strokeWidth={3} strokeLinejoin="round" />
    </svg>
  );
}

function MetaRow() {
  return (
    <div className="mt-[75px] flex h-16 items-center pl-2">
      <Avatar />
      <span className="ml-[30px]">
        <Cyclist />
      </span>
      <time className="ml-[22px] w-[282px] text-[31px] leading-10 whitespace-nowrap text-[#ececec]">3月14日 @ 08:27</time>
      <button type="button" aria-label="隐私">
        <svg width="39" height="52" viewBox="0 0 39 52">
          <path d="M0 23H39V51H0Z" fill="#a5a5a5" />
          <path d="M9 24V13A10 10 0 0 1 30 14" fill="none" stroke="#a5a5a5" strokeWidth={5} />
        </svg>
      </button>
      <button type="button" aria-label="收藏" className="ml-[67px]">
        <svg width="50" height="48" viewBox="0 0 50 48" fill="#a5a5a5">
          <path
            fillRule="evenodd"
            d="M25 1 31 17 50 18 35 30 40 47 25 38 10 47 15 30 0 18 19 17ZM25 12 22 21 11 22 20 29 16 39 25 33 34 39 30 29 39 22 28 21Z"
          />
        </svg>
      </button>
      <button type="button" aria-label="添加照片" className="ml-[63px]">
        <svg width="51" height="54" viewBox="0 0 51 54" fill="none" stroke="#55a8fb" strokeWidth={5}>
          <path d="M25 11H3V49H40V26" />
          <path d="M30 11H51M41 1V21" />
          <path d="M10 40V31L17 23 24 32 28 29 33 35V40Z" fill="#55a8fb" stroke="none" />
        </svg>
      </button>
    </div>
  );
}

function Pulse() {
  return (
    <button type="button" aria-label="查看图表" className="shrink-0">
      <svg width="52" height="52" viewBox="0 0 52 52" fill="none" stroke="#55a8fb">
        <circle cx="26" cy="26" r="24" strokeWidth={4} />
        <path d="M11 29 16 23 20 30 26 14 31 38 36 20 40 31" strokeWidth={3} strokeLinejoin="bevel" />
      </svg>
    </button>
  );
}

function Stat({ value, unit, label, pulse }: { value: string; unit?: string; label: string; pulse?: boolean }) {
  return (
    <div className="flex h-[159px] flex-col border-t-[3px] border-[#3a3a3a] pt-2">
      <dd className="flex h-[70px] items-center gap-4">
        <span className="text-[53px] leading-[64px] whitespace-nowrap text-[#f4f4f4]">
          {value}
          {unit && <span className="ml-3 text-[36px] leading-none">{unit}</span>}
        </span>
        {pulse && <Pulse />}
      </dd>
      <dt className="order-last text-[33px] leading-10 text-[#8f8f8f]">{label}</dt>
    </div>
  );
}

export default function App() {
  return (
    <div className={`relative flex h-screen flex-col overflow-hidden bg-[#101010] ${FONT}`} lang="zh-CN">
      <Header />
      <main className="grow">
        <div className="bg-[#1e1e1e]">
          <div className="h-5" />
          <div className="relative">
            <MapView />
            <Weather />
          </div>
          <Legend />
          <section className="px-10">
            <MetaRow />
            <div className="mt-10 flex h-20 items-center justify-between pr-[38px]">
              <h2 className="text-[56px] leading-[72px] font-bold text-[#f4f4f4]">穆斯林 斋月 主麻</h2>
              <button type="button" aria-label="编辑名称">
                <svg width="36" height="36" viewBox="0 0 36 36" fill="#a5a5a5">
                  <path d="M27 0 36 8 12 31 1 35 5 23ZM7 25 4 32 11 29Z" fillRule="evenodd" />
                </svg>
              </button>
            </div>
            <div className="mt-[49px] flex items-center justify-between">
              <p className="text-[43px] leading-[56px] text-[#8f8f8f]">有什么想法?</p>
              <button
                type="button"
                className="h-[92px] w-64 rounded border-[3px] border-[#559fea] text-[43px] leading-[56px] text-[#55a8fb]"
              >
                添加笔记
              </button>
            </div>
            <dl>
              <div className="mt-8 flex flex-col">
                <dd className="text-[84px] leading-[96px] font-semibold text-[#f4f4f4]">
                  29.67<span className="ml-3 text-[36px] leading-none font-normal">公里</span>
                </dd>
                <dt className="order-last mt-1 text-[33px] leading-10 text-[#8f8f8f]">距离</dt>
              </div>
              <div className="mt-[41px] grid grid-cols-2 gap-x-10">
                <Stat value="1:02:04" label="总时长" />
                <Stat value="28.7" unit="km/h" label="平均速度" pulse />
                <Stat value="126" unit="米" label="累计爬升" pulse />
                <Stat value="157" unit="bpm" label="平均心率" pulse />
              </div>
            </dl>
            <p className="mt-12 text-[28px] leading-10 text-[#8f8f8f]">成为第一个点赞的人</p>
          </section>
          <div className="mt-[27px] grid h-[117px] grid-cols-2 gap-1 border-4 border-[#232323] bg-[#232323]">
            <button type="button" aria-label="点赞" className="flex items-center justify-center bg-[#1e1e1e]">
              <svg width="52" height="46" viewBox="0 0 52 46" fill="none" stroke="#55a8fb" strokeWidth={5}>
                <path d="M26 41 6 22C-1 13 6 4 14 4Q21 4 26 12Q31 4 38 4C46 4 53 13 46 22Z" />
              </svg>
            </button>
            <button type="button" aria-label="评论" className="flex items-center justify-center bg-[#1e1e1e]">
              <svg width="46" height="44" viewBox="0 0 46 44" fill="none" stroke="#55a8fb" strokeWidth={5}>
                <path d="M3 3H43V31H21L10 40V31H3Z" />
              </svg>
            </button>
          </div>
        </div>
        <button type="button" className="mt-10 flex h-[133px] w-full items-center justify-between bg-[#1e1e1e] pr-[49px] pl-10">
          <span className="text-[43px] leading-[56px] text-[#f0f0f0]">查看爬升</span>
          <svg width="18" height="30" viewBox="0 0 18 30" fill="none" stroke="#a5a5a5" strokeWidth={3} aria-hidden="true">
            <path d="M2 2 15 15 2 28" />
          </svg>
        </button>
        <div className="flex justify-between px-10 pt-12 text-[33px] leading-10 text-[#8f8f8f]">
          <span>自我评估</span>
          <a href="#help" className="text-[#55a8fb]">
            帮助
          </a>
        </div>
      </main>
      <div className="absolute inset-x-0 bottom-5 mx-auto h-3 w-[387px] rounded-full bg-white" />
      <span className="absolute right-2 bottom-2 rounded-full bg-[#2c2c2c] px-1 text-[10px] leading-[18px] text-[#0c0c0c]">
        小红书
      </span>
    </div>
  );
}
